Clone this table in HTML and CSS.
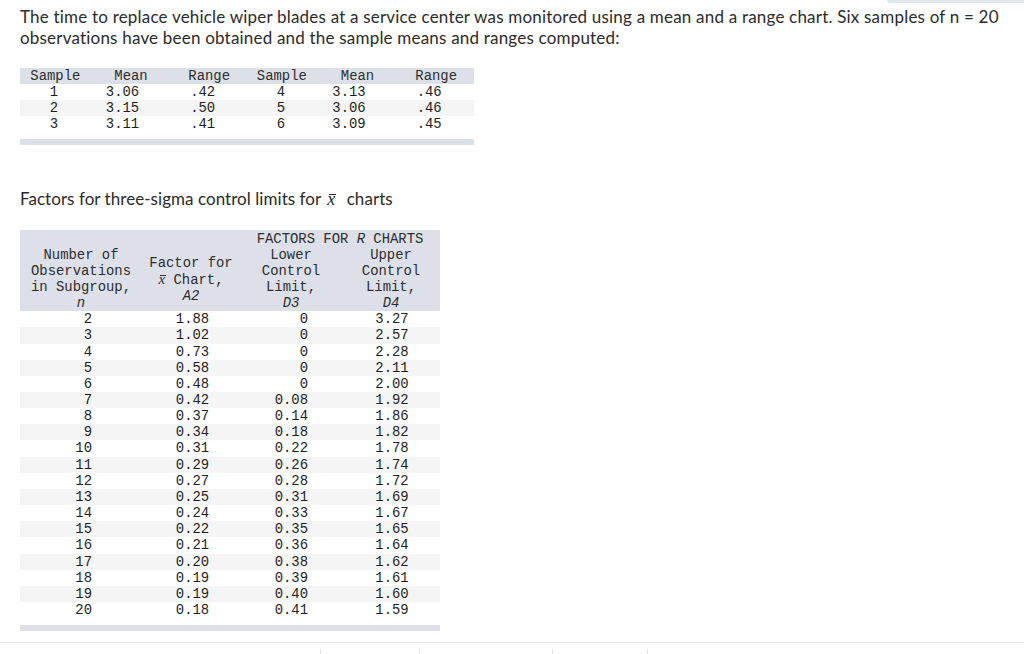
FILE: index.html
```html
<!DOCTYPE html>
<html lang="en">
<head>
<meta charset="utf-8">
<title>Control charts</title>
<link rel="stylesheet" href="styles.css">
</head>
<body>
<div class="topbar"><div class="topbar-tab"></div></div>
<main class="content">
  <p class="intro">The time to replace vehicle wiper blades at a service center was monitored using a mean and a range chart. Six samples of n = 20<br>observations have been obtained and the sample means and ranges computed:</p>

  <section class="samples">
    <div class="s-row s-head">
      <div class="c1">Sample</div><div class="c2">Mean</div><div class="c3">Range</div><div class="c4">Sample</div><div class="c5">Mean</div><div class="c6">Range</div>
    </div>
    <div class="s-body">
      <div class="s-row"><div class="c1">1</div><div class="c2">3.06</div><div class="c3">.42</div><div class="c4">4</div><div class="c5">3.13</div><div class="c6">.46</div></div>
      <div class="s-row"><div class="c1">2</div><div class="c2">3.15</div><div class="c3">.50</div><div class="c4">5</div><div class="c5">3.06</div><div class="c6">.46</div></div>
      <div class="s-row"><div class="c1">3</div><div class="c2">3.11</div><div class="c3">.41</div><div class="c4">6</div><div class="c5">3.09</div><div class="c6">.45</div></div>
    </div>
    <div class="t-bar"></div>
  </section>

  <h2 class="factors-title">Factors for three-sigma control limits for <span class="xbar xbar-title">x</span> charts</h2>

  <section class="factors">
    <div class="f-head">
      <div class="f-group"><span class="f-label">FACTORS FOR <i>R</i> CHARTS</span></div>
      <div class="f-n">Number of<br>Observations<br>in Subgroup,<br><i>n</i></div>
      <div class="f-a2">Factor for<br><span class="xbar xbar-cell">x</span> Chart,<br><i>A2</i></div>
      <div class="f-d3">Lower<br>Control<br>Limit,<br><i>D3</i></div>
      <div class="f-d4">Upper<br>Control<br>Limit,<br><i>D4</i></div>
    </div>
    <div class="f-body">
      <div class="f-row"><div class="fn">2</div><div class="fa">1.88</div><div class="fl">0</div><div class="fu">3.27</div></div>
      <div class="f-row"><div class="fn">3</div><div class="fa">1.02</div><div class="fl">0</div><div class="fu">2.57</div></div>
      <div class="f-row"><div class="fn">4</div><div class="fa">0.73</div><div class="fl">0</div><div class="fu">2.28</div></div>
      <div class="f-row"><div class="fn">5</div><div class="fa">0.58</div><div class="fl">0</div><div class="fu">2.11</div></div>
      <div class="f-row"><div class="fn">6</div><div class="fa">0.48</div><div class="fl">0</div><div class="fu">2.00</div></div>
      <div class="f-row"><div class="fn">7</div><div class="fa">0.42</div><div class="fl">0.08</div><div class="fu">1.92</div></div>
      <div class="f-row"><div class="fn">8</div><div class="fa">0.37</div><div class="fl">0.14</div><div class="fu">1.86</div></div>
      <div class="f-row"><div class="fn">9</div><div class="fa">0.34</div><div class="fl">0.18</div><div class="fu">1.82</div></div>
      <div class="f-row"><div class="fn">10</div><div class="fa">0.31</div><div class="fl">0.22</div><div class="fu">1.78</div></div>
      <div class="f-row"><div class="fn">11</div><div class="fa">0.29</div><div class="fl">0.26</div><div class="fu">1.74</div></div>
      <div class="f-row"><div class="fn">12</div><div class="fa">0.27</div><div class="fl">0.28</div><div class="fu">1.72</div></div>
      <div class="f-row"><div class="fn">13</div><div class="fa">0.25</div><div class="fl">0.31</div><div class="fu">1.69</div></div>
      <div class="f-row"><div class="fn">14</div><div class="fa">0.24</div><div class="fl">0.33</div><div class="fu">1.67</div></div>
      <div class="f-row"><div class="fn">15</div><div class="fa">0.22</div><div class="fl">0.35</div><div class="fu">1.65</div></div>
      <div class="f-row"><div class="fn">16</div><div class="fa">0.21</div><div class="fl">0.36</div><div class="fu">1.64</div></div>
      <div class="f-row"><div class="fn">17</div><div class="fa">0.20</div><div class="fl">0.38</div><div class="fu">1.62</div></div>
      <div class="f-row"><div class="fn">18</div><div class="fa">0.19</div><div class="fl">0.39</div><div class="fu">1.61</div></div>
      <div class="f-row"><div class="fn">19</div><div class="fa">0.19</div><div class="fl">0.40</div><div class="fu">1.60</div></div>
      <div class="f-row"><div class="fn">20</div><div class="fa">0.18</div><div class="fl">0.41</div><div class="fu">1.59</div></div>
    </div>
    <div class="t-bar t-bar-f"></div>
  </section>
</main>
<footer class="bottom">
  <div class="tick tick-1"></div>
  <div class="tick tick-2"></div>
  <div class="tick tick-3"></div>
  <div class="tick tick-4"></div>
</footer>
</body>
</html>
```

FILE: styles.css
```css
html, body {
  margin: 0;
  padding: 0;
  background: #ffffff;
}

body {
  font-family: Lato, "Liberation Sans", sans-serif;
  color: #2b2b2b;
  width: 1024px;
  height: 654px;
  overflow: hidden;
}

.topbar {
  height: 3px;
  display: flex;
  justify-content: flex-end;
}

.topbar-tab {
  width: 137px;
  background: #e2e7ef;
  border-bottom-left-radius: 3px;
}

.content {
  padding: 0 20px;
}

.intro {
  margin: 3px 0 0;
  font-size: 17px;
  line-height: 21px;
  letter-spacing: 0.2px;
  color: #2b2b2b;
  white-space: nowrap;
}

/* Sample table */
.samples {
  width: 454px;
  margin-top: 20px;
  font-family: "Liberation Mono", "DejaVu Sans Mono", monospace;
  font-size: 13.9px;
  color: #1e1e1e;
}

.s-row {
  display: grid;
  grid-template-columns: repeat(6, 1fr);
  height: 16.17px;
  line-height: 16.17px;
  text-align: center;
  white-space: nowrap;
}

.s-head {
  background: #dde0e8;
  color: #2e2e2e;
}

.s-head .c1 { padding-right: 5px; }
.s-head .c2 { padding-right: 5px; }
.s-head .c4 { padding-right: 6px; }
.s-head .c5 { padding-right: 6px; }

.s-body .c1 { padding-right: 8px; }
.s-body .c2 { padding-right: 22px; }
.s-body .c3 { padding-right: 13px; }
.s-body .c4 { padding-right: 8px; }
.s-body .c5 { padding-right: 23px; }
.s-body .c6 { padding-right: 14px; }

.s-body .s-row:nth-child(even),
.f-body .f-row:nth-child(even) {
  background: #f5f5f5;
}

.t-bar {
  height: 6px;
  margin-top: 6.6px;
  background: #dde0e8;
}

.t-bar-f {
  margin-top: 7px;
}

/* Heading */
.factors-title {
  margin: 43px 0 0;
  font-size: 17px;
  font-weight: normal;
  line-height: 22px;
  letter-spacing: 0.05px;
  color: #2b2b2b;
}

/* x-bar symbol */
.xbar {
  position: relative;
  display: inline-block;
  font-family: "Liberation Serif", "DejaVu Serif", serif;
  font-style: italic;
  letter-spacing: 0;
}

.xbar::before {
  content: "";
  position: absolute;
  left: 2px;
  right: -1px;
  border-top: 1px solid currentColor;
}

.xbar-title {
  font-size: 18px;
  line-height: 22px;
  margin: 0 7px 0 2px;
}

.xbar-title::before {
  top: 6px;
}

.xbar-cell {
  font-size: 15px;
  line-height: 16px;
}

.xbar-cell::before {
  top: 4px;
}

/* Factors table */
.factors {
  width: 420px;
  margin-top: 20px;
  font-family: "Liberation Mono", "DejaVu Sans Mono", monospace;
  font-size: 13.9px;
  color: #1e1e1e;
}

.f-head {
  display: grid;
  grid-template-columns: 122px 98px 102px 98px;
  grid-template-rows: 16px 64px;
  padding-top: 1px;
  background: #dde0e8;
  color: #2e2e2e;
  line-height: 16px;
  text-align: center;
  white-space: nowrap;
}

.f-group {
  grid-column: 3 / 5;
  grid-row: 1;
}

.f-n { grid-column: 1; grid-row: 2; }
.f-a2 { grid-column: 2; grid-row: 2; align-self: center; }
.f-d3 { grid-column: 3; grid-row: 2; }
.f-d4 { grid-column: 4; grid-row: 2; }

.f-row {
  display: grid;
  grid-template-columns: 122px 98px 102px 98px;
  height: 16.17px;
  line-height: 16.17px;
  white-space: nowrap;
}

.fn { text-align: right; padding-right: 50px; }
.fa { text-align: center; padding-left: 3px; }
.fl { text-align: right; padding-right: 34px; }
.fu { text-align: center; padding-left: 2px; }

/* Bottom strip */
.bottom {
  margin-top: 11px;
  border-top: 1px solid #ececec;
  height: 12px;
  display: flex;
  align-items: flex-end;
}

.tick {
  width: 1px;
  height: 6px;
  background: #e4e4e4;
}

.tick-1 { margin-left: 320px; }
.tick-2 { margin-left: 98px; }
.tick-3 { margin-left: 132px; }
.tick-4 { margin-left: 94px; }
```
